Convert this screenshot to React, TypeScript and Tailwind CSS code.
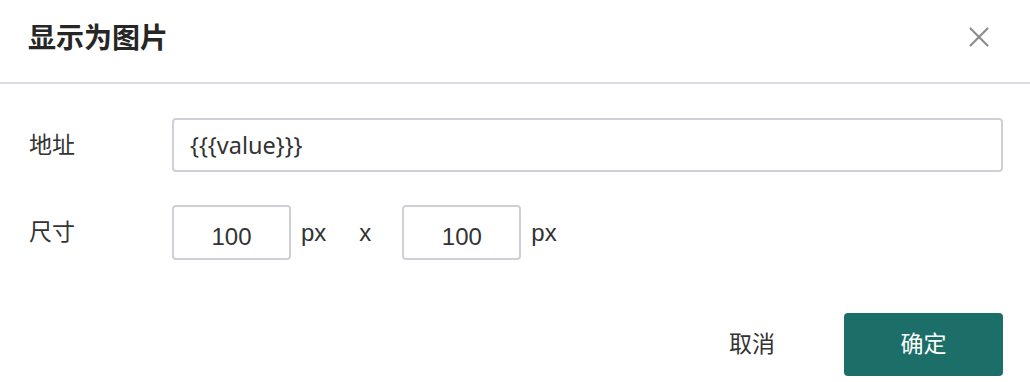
import { X } from 'lucide-react'

const font = { fontFamily: '"Liberation Sans", "Noto Sans CJK SC", sans-serif' }

export default function App() {
  return (
    <div className="h-[382px] w-[1030px] bg-white text-[#333]" style={font}>
      <div className="flex h-[84px] items-center justify-between border-b-2 border-[#d9dce0] pl-[28px] pr-[34px]">
        <h2 className="pb-[4px] text-[28px] font-bold leading-none text-[#262626]">显示为图片</h2>
        <button className="pb-[8px] text-[#8c8c8c]">
          <X className="h-[34px] w-[34px]" strokeWidth={1.5} />
        </button>
      </div>

      <div className="pl-[29px] pr-[27px] pt-[34px]">
        <div className="flex items-center">
          <label className="w-[143px] text-[23px] text-[#333]">地址</label>
          <input
            defaultValue="{{{value}}}"
            className="h-[54px] flex-1 rounded-[4px] border-2 border-[#cdd1d7] px-[16px] font-['Noto_Sans'] text-[23.5px] text-[#333] outline-none"
          />
        </div>

        <div className="mt-[33px] flex items-center">
          <label className="w-[143px] text-[23px] text-[#333]">尺寸</label>
          <input
            defaultValue="100"
            className="h-[55px] w-[119px] rounded-[4px] border-2 border-[#cdd1d7] pt-[8px] text-center text-[24px] text-[#333] outline-none"
          />
          <span className="ml-[10px] text-[24px] text-[#333]">px</span>
          <span className="ml-[33px] text-[24px] text-[#333]">x</span>
          <input
            defaultValue="100"
            className="ml-[31px] h-[55px] w-[119px] rounded-[4px] border-2 border-[#cdd1d7] pt-[8px] text-center text-[24px] text-[#333] outline-none"
          />
          <span className="ml-[10px] text-[24px] text-[#333]">px</span>
        </div>

        <div className="mt-[53px] flex items-center justify-end">
          <button className="mr-[69px] text-[23px] text-[#333]">取消</button>
          <button className="h-[63px] w-[159px] rounded-[4px] bg-[#1b6f68] text-[23px] text-white">确定</button>
        </div>
      </div>
    </div>
  )
}
